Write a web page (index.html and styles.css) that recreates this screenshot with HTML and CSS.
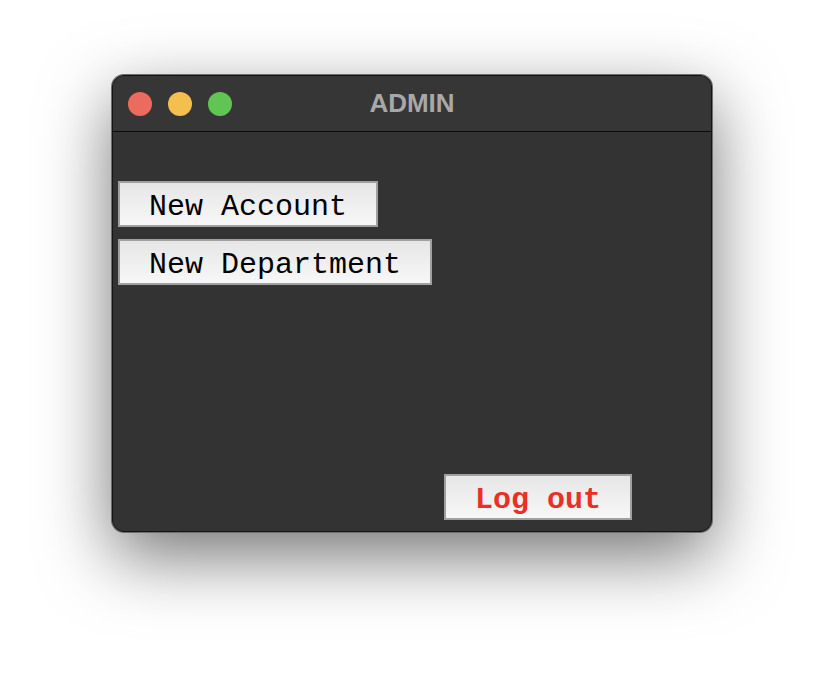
FILE: index.html
```html
<!DOCTYPE html>
<html lang="en">
<head>
    <meta charset="UTF-8">
    <meta name="viewport" content="width=device-width, initial-scale=1.0">
    <title>ADMIN</title>
    <link rel="stylesheet" href="styles.css">
</head>
<body>
    <div class="window">
        <div class="title-bar">
            <div class="lights">
                <span class="light red"></span>
                <span class="light yellow"></span>
                <span class="light green"></span>
            </div>
            <p class="title">ADMIN</p>
        </div>

        <div class="content">
            <div class="menu">
                <button class="menu-button">New Account</button>
                <button class="menu-button">New Department</button>
            </div>
            <div class="footer">
                <button class="menu-button logout-button">Log out</button>
            </div>
        </div>
    </div>
</body>
</html>
```

FILE: styles.css
```css
html{
    background-color: white;
}
body{
    margin: 0;
    box-sizing: border-box;
    min-height: 680px;
    padding: 75px 0 0 112px;
    background-color: white;
    font-family: "Liberation Sans", Arial, sans-serif;
}

.window{
    box-sizing: border-box;
    width: 600px;
    height: 457px;
    background-color: rgb(51, 51, 51);
    border: 1px solid rgb(20, 20, 20);
    border-radius: 12px;
    box-shadow: 0 0 0 1px rgb(110, 110, 110), 0 24px 70px rgba(0, 0, 0, 0.55);
    display: flex;
    flex-direction: column;
    overflow: hidden;
}

.title-bar{
    position: relative;
    height: 55px;
    flex-shrink: 0;
    background-color: rgb(54, 54, 54);
    border-bottom: 1px solid rgb(12, 12, 12);
    display: flex;
    align-items: center;
    justify-content: center;
}
.lights{
    position: absolute;
    left: 15px;
    top: 16px;
    display: flex;
    gap: 16px;
}
.light{
    width: 24px;
    height: 24px;
    border-radius: 50%;
}
.red{
    background-color: rgb(237, 106, 94);
}
.yellow{
    background-color: rgb(245, 191, 79);
}
.green{
    background-color: rgb(97, 197, 84);
}
.title{
    margin: 0;
    font-size: 26px;
    font-weight: bold;
    color: rgb(168, 168, 168);
}

.content{
    flex: 1;
    display: flex;
    flex-direction: column;
    justify-content: space-between;
    padding: 49px 0 11px 5px;
}
.menu{
    display: flex;
    flex-direction: column;
    align-items: flex-start;
    gap: 12px;
}
.menu-button{
    box-sizing: border-box;
    height: 46px;
    padding: 5px 29px 0;
    border: 2px solid rgb(160, 160, 160);
    border-radius: 0;
    background: linear-gradient(rgb(230, 230, 230), rgb(247, 247, 247));
    font-family: "Liberation Mono", "Courier New", monospace;
    font-size: 30px;
    color: black;
    cursor: pointer;
}
.footer{
    padding-left: 326px;
}
.logout-button{
    font-weight: bold;
    color: rgb(232, 48, 38);
}
```
